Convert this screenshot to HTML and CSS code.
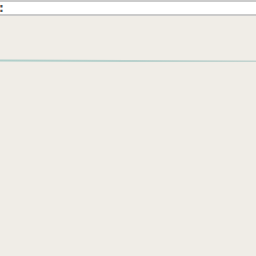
FILE: index.html
```html
<!DOCTYPE html>
<html lang="en">
<head>
  <meta charset="UTF-8">
  <meta name="viewport" content="width=device-width, initial-scale=1.0">
  <title>Page</title>
  <link rel="stylesheet" href="styles.css">
</head>
<body>
  <!-- Address strip -->
  <div class="topbar">
    <span class="mark">:</span>
  </div>

  <!-- Content area -->
  <div class="content">
    <div class="rule"></div>
  </div>
</body>
</html>
```

FILE: styles.css
```css
body {
  margin: 0;
  background: #f0ede7;
  font-family: 'DejaVu Sans', sans-serif;
}

.topbar {
  height: 12px;
  background: #fff;
  border-top: 2px solid #cbcbcb;
  border-bottom: 2px solid #cbcbcb;
  display: flex;
  align-items: center;
  overflow: hidden;
}

.mark {
  font-size: 12px;
  line-height: 12px;
  font-weight: bold;
  color: #555;
  margin-left: -1px;
}

.content {
  padding-top: 44px;
}

.rule {
  height: 2px;
  background: linear-gradient(to right, #b0cfca, #c2d3cf);
  transform: rotate(0.22deg);
}
```
